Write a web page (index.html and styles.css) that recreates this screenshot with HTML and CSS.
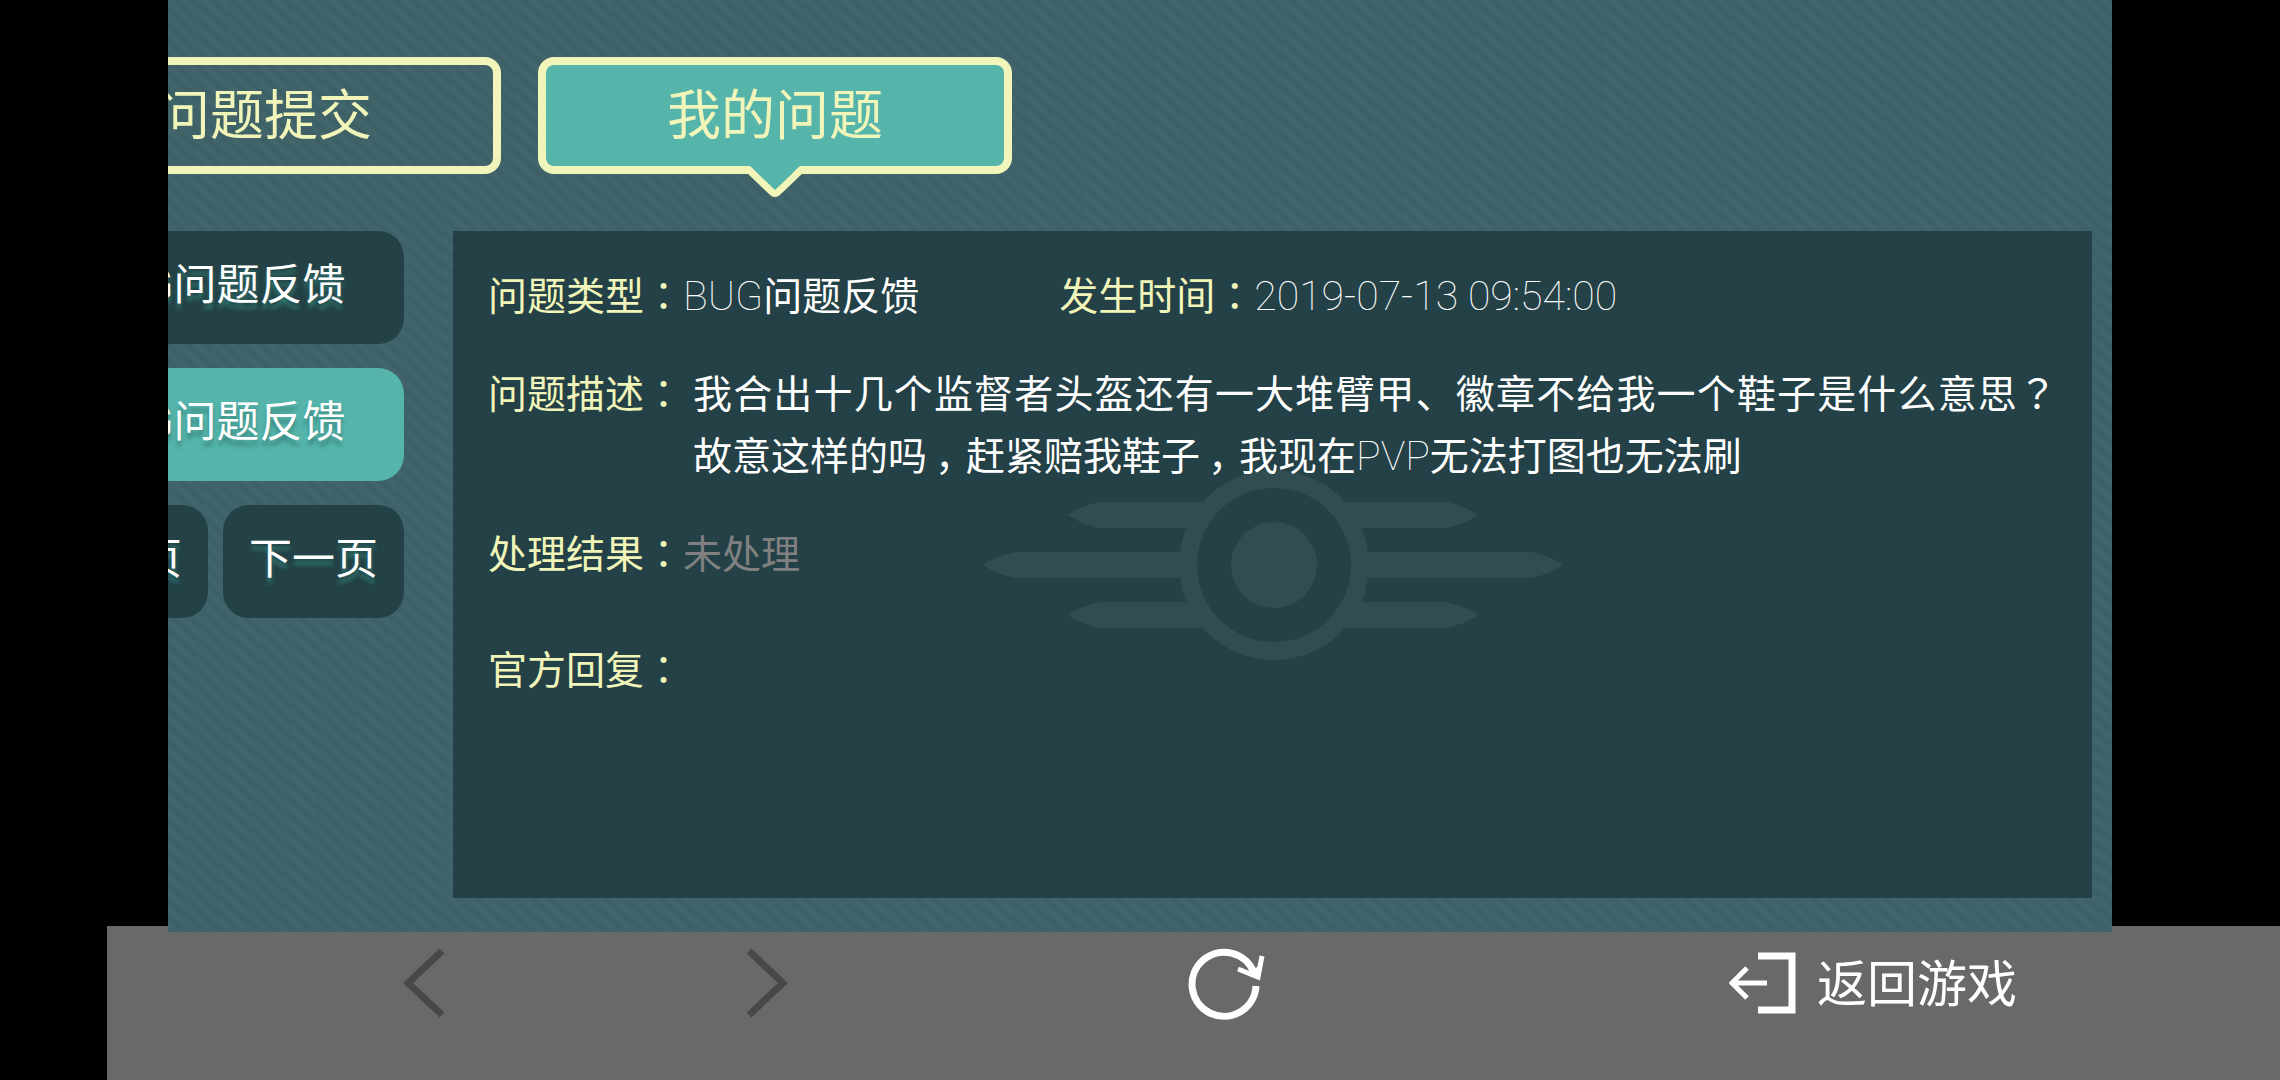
FILE: index.html
```html
<!DOCTYPE html>
<html lang="zh-CN">
<head>
  <meta charset="UTF-8" />
  <meta name="viewport" content="width=device-width, initial-scale=1.0" />
  <title>我的问题</title>
  <link rel="stylesheet" href="styles.css">
</head>
<body>
  <div class="webview">
    <div class="page">
      <nav class="tabs">
        <button type="button" class="tab">问题提交</button>
        <button type="button" class="tab active">
          我的问题
          <svg class="tab-arrow" viewBox="0 0 60 32" aria-hidden="true">
            <path class="arrow-fill" d="M5 0H55L30 25Z" />
            <path class="arrow-line" d="M4 4L27 26Q30 29 33 26L56 4" />
          </svg>
        </button>
      </nav>

      <main class="main">
        <!-- 问题列表 -->
        <aside class="side">
          <button type="button" class="item"><span class="latin">BUG</span>问题反馈</button>
          <button type="button" class="item active"><span class="latin">BUG</span>问题反馈</button>
          <div class="pager">
            <button type="button" class="item">上一页</button>
            <button type="button" class="item">下一页</button>
          </div>
        </aside>

        <!-- 问题详情 -->
        <section class="detail">
          <svg class="watermark" viewBox="0 0 580 192" aria-hidden="true">
            <path d="M85 46Q97 37 117 33H463Q483 37 495 46Q483 55 463 59H117Q97 55 85 46Z" />
            <path d="M0 96Q12 87 32 83H548Q568 87 580 96Q568 105 548 109H32Q12 105 0 96Z" />
            <path d="M85 146Q97 137 117 133H463Q483 137 495 146Q483 155 463 159H117Q97 155 85 146Z" />
            <circle cx="291" cy="96" r="95" />
            <circle class="hole" cx="291" cy="96" r="77" />
            <circle cx="291" cy="96" r="43" />
          </svg>
          <dl class="row">
            <dt>问题类型<span class="mark" lang="zh-TW">：</span></dt>
            <dd><span class="latin">BUG</span>问题反馈</dd>
            <dt class="second">发生时间<span class="mark" lang="zh-TW">：</span></dt>
            <dd><span class="latin">2019-07-13 09:54:00</span></dd>
          </dl>
          <dl class="row">
            <dt>问题描述<span class="mark" lang="zh-TW">：</span></dt>
            <dd class="desc">我合出十几个监督者头盔还有一大堆臂甲、徽章不给我一个鞋子是什么意思<span class="mark" lang="zh-TW">？</span>故意这样的吗<span class="comma">，</span>赶紧赔我鞋子<span class="comma">，</span>我现在<span class="latin">PVP</span>无法打图也无法刷</dd>
          </dl>
          <dl class="row result">
            <dt>处理结果<span class="mark" lang="zh-TW">：</span></dt>
            <dd class="pending">未处理</dd>
          </dl>
          <dl class="row">
            <dt>官方回复<span class="mark" lang="zh-TW">：</span></dt>
            <dd></dd>
          </dl>
        </section>
      </main>
    </div>
  </div>

  <!-- 底部工具栏 -->
  <footer class="toolbar">
    <button type="button" class="tool dim" aria-label="后退">
      <svg width="42" height="70" viewBox="0 0 42 70"><path d="M39 3L5 35L39 67" /></svg>
    </button>
    <button type="button" class="tool dim" aria-label="前进">
      <svg width="42" height="70" viewBox="0 0 42 70"><path d="M3 3L37 35L3 67" /></svg>
    </button>
    <button type="button" class="tool" aria-label="刷新">
      <svg width="78" height="74" viewBox="0 0 78 74">
        <path class="thick" d="M69 40A32 32 0 1 1 67 27" />
        <path class="thin" d="M51 23L71 31L75 10" />
        <path class="solid" d="M64 27L72 19L72 33Z" />
      </svg>
    </button>
    <button type="button" class="tool">
      <svg width="68" height="62" viewBox="0 0 68 62">
        <path class="thick" d="M29 4H63V58H29" />
        <path class="thin" d="M38 31H4M18 16L3 31L18 46" />
      </svg>
      <span>返回游戏</span>
    </button>
  </footer>
</body>
</html>
```

FILE: styles.css
```css
* {
  margin: 0;
  padding: 0;
  box-sizing: border-box;
}

body {
  display: flex;
  flex-direction: column;
  min-height: 100vh;
  overflow: hidden;
  background-color: #000;
  font-family: Roboto, "Noto Sans CJK SC", sans-serif;
}

button {
  border: none;
  background: none;
  color: inherit;
  font: inherit;
  white-space: nowrap;
  cursor: pointer;
}

svg {
  display: block;
  fill: none;
}

.webview {
  flex: 1;
  display: flex;
  position: relative;
  z-index: 1;
  margin: 0 168px -6px;
  overflow: hidden;
  background: repeating-linear-gradient(41deg, #3c6065 0, #41656b 5px, #41656b 7px, #3c6065 12px);
}

/* 页面向左滚动了一段，左侧被裁掉 */
.page {
  flex: 1;
  display: flex;
  flex-direction: column;
  margin-left: -141px;
  padding: 57px 20px 34px 0;
}

.tabs {
  display: flex;
  gap: 37px;
  margin-bottom: 57px;
}
.tab {
  position: relative;
  width: 474px;
  height: 117px;
  padding-bottom: 8px;
  border: 8px solid #f1f5b9;
  border-radius: 16px;
  color: #f1f5b9;
  font-size: 54px;
}
.tab.active {
  background-color: #55b5aa;
}
.tab-arrow {
  position: absolute;
  left: 50%;
  top: 100%;
  width: 60px;
  height: 32px;
  transform: translateX(-50%);
}
.arrow-fill {
  fill: #55b5aa;
}
.arrow-line {
  stroke: #f1f5b9;
  stroke-width: 7px;
}

.main {
  flex: 1;
  display: flex;
  gap: 49px;
}

.side {
  display: flex;
  flex-direction: column;
  gap: 24px;
  width: 377px;
}
.item {
  height: 113px;
  padding-bottom: 14px;
  border-radius: 26px;
  background-color: #234146;
  color: #fff;
  font-size: 43px;
  text-shadow: 0 6px 4px #2f756d;
}
.item.active {
  background-color: #55b5aa;
  text-shadow: 0 6px 4px #3a8780;
}
.item .latin {
  font-size: 45px;
  font-weight: 400;
}
.pager {
  display: flex;
  gap: 15px;
}
.pager .item {
  flex: 1;
}

.detail {
  flex: 1;
  position: relative;
  padding: 35px;
  background-color: #234146;
  color: #fff;
  font-size: 39px;
  line-height: 62px;
}
.watermark {
  position: absolute;
  left: 50%;
  top: 50%;
  width: 580px;
  height: 192px;
  transform: translate(-50%, -50%);
  fill: #304e52;
}
.hole {
  fill: #234146;
}
.row {
  position: relative;
  display: flex;
  margin-bottom: 36px;
}
.row dt {
  flex: none;
  color: #f1f5b9;
}
.row .second {
  margin-left: 140px;
}
.row .desc {
  margin-left: 10px;
  text-align: justify;
}
.row .pending {
  color: #808080;
}
.result {
  margin-bottom: 54px;
}
.latin {
  font-size: 41px;
  font-weight: 100;
  line-height: 0;
}
/* 标点居中显示 */
.mark {
  font-family: "Noto Sans CJK TC", sans-serif;
  line-height: 0;
}
.comma {
  margin: 0 -8px 0 8px;
}

.toolbar {
  display: grid;
  grid-template-columns: 336fr 350fr 568fr 726fr;
  height: 154px;
  margin-left: 107px;
  padding: 0 44px 40px 149px;
  background-color: #696969;
  color: #fff;
  font-size: 50px;
  line-height: 60px;
}
.tool {
  display: flex;
  align-items: center;
  justify-content: center;
  gap: 20px;
  stroke: #fff;
}
.tool span {
  padding-top: 4px;
}
.tool.dim {
  stroke: #484848;
  stroke-width: 7px;
}
.thick {
  stroke-width: 7px;
}
.thin {
  stroke-width: 5px;
}
.solid {
  fill: #fff;
  stroke: none;
}
```
